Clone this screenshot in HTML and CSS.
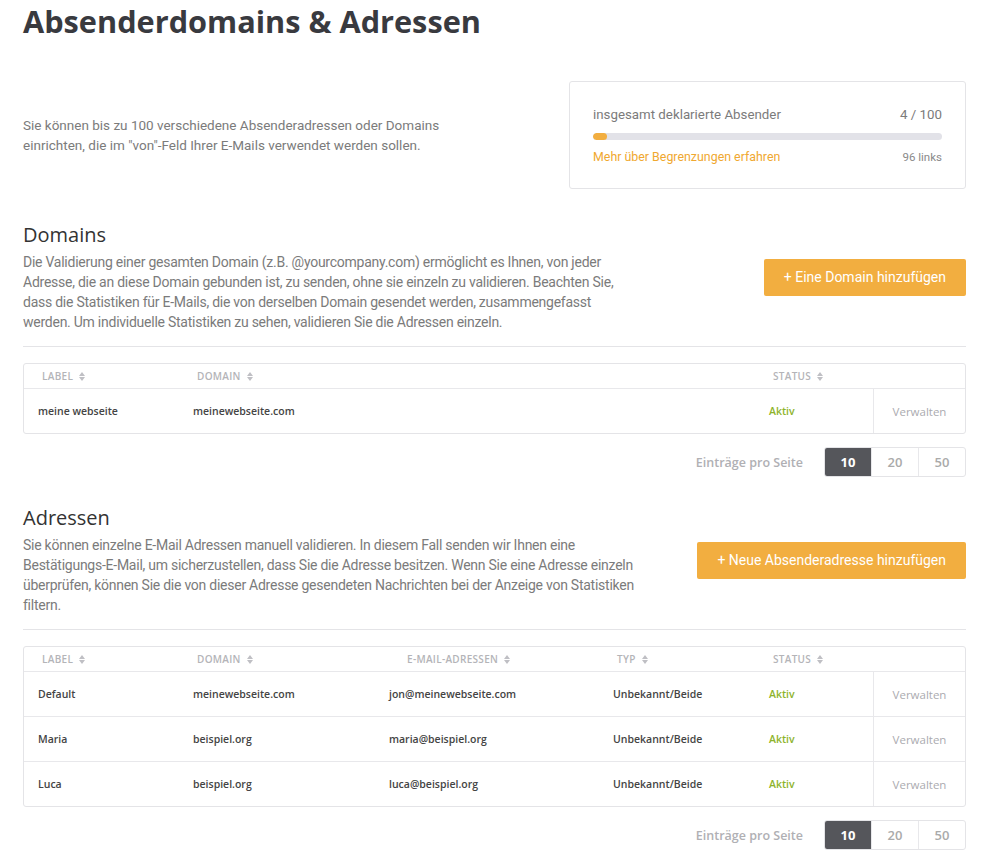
FILE: index.html
```html
<!DOCTYPE html>
<html>
	<head>
		<meta charset="UTF-8">
		<title>Absenderdomains &amp; Adressen</title>
		<link rel="stylesheet" href="styles.css">
	</head>
	<body>
		<div class="page">
			<h1 class="title">Absenderdomains &amp; Adressen</h1>

			<div class="intro">
				<p class="intro-text">Sie können bis zu 100 verschiedene Absenderadressen oder Domains einrichten, die im "von"-Feld Ihrer E-Mails verwendet werden sollen.</p>
				<div class="quota">
					<div class="quota-line">
						<span>insgesamt deklarierte Absender</span>
						<span>4 / 100</span>
					</div>
					<div class="quota-bar"><div class="quota-fill" style="width: 4%"></div></div>
					<div class="quota-foot">
						<a href="javascript:;" class="quota-link">Mehr über Begrenzungen erfahren</a>
						<span class="quota-left">96 links</span>
					</div>
				</div>
			</div>

			<!-- Domains -->
			<div class="section">
				<div class="section-head">
					<div class="section-info">
						<h2>Domains</h2>
						<p>Die Validierung einer gesamten Domain (z.B. @yourcompany.com) ermöglicht es Ihnen, von jeder Adresse, die an diese Domain gebunden ist, zu senden, ohne sie einzeln zu validieren. Beachten Sie, dass die Statistiken für E-Mails, die von derselben Domain gesendet werden, zusammengefasst werden. Um individuelle Statistiken zu sehen, validieren Sie die Adressen einzeln.</p>
					</div>
					<a href="javascript:;" class="btn-add">+ Eine Domain hinzufügen</a>
				</div>

				<div class="tbl tbl-domains">
					<div class="tr th">
						<div class="cell">LABEL <i class="sort"></i></div>
						<div class="cell">DOMAIN <i class="sort"></i></div>
						<div class="cell">STATUS <i class="sort"></i></div>
						<div class="cell"></div>
					</div>
					<div class="tr">
						<div class="cell">meine webseite</div>
						<div class="cell">meinewebseite.com</div>
						<div class="cell status">Aktiv</div>
						<div class="cell manage">Verwalten</div>
					</div>
				</div>

				<div class="pager">
					<span class="pager-label">Einträge pro Seite</span>
					<div class="pager-btns">
						<a href="javascript:;" class="on">10</a><a href="javascript:;">20</a><a href="javascript:;">50</a>
					</div>
				</div>
			</div>

			<!-- Adressen -->
			<div class="section">
				<div class="section-head">
					<div class="section-info section-info-wide">
						<h2>Adressen</h2>
						<p>Sie können einzelne E-Mail Adressen manuell validieren. In diesem Fall senden wir Ihnen eine Bestätigungs-E-Mail, um sicherzustellen, dass Sie die Adresse besitzen. Wenn Sie eine Adresse einzeln überprüfen, können Sie die von dieser Adresse gesendeten Nachrichten bei der Anzeige von Statistiken filtern.</p>
					</div>
					<a href="javascript:;" class="btn-add">+ Neue Absenderadresse hinzufügen</a>
				</div>

				<div class="tbl tbl-addresses">
					<div class="tr th">
						<div class="cell">LABEL <i class="sort"></i></div>
						<div class="cell">DOMAIN <i class="sort"></i></div>
						<div class="cell wide">E-MAIL-ADRESSEN <i class="sort"></i></div>
						<div class="cell">TYP <i class="sort"></i></div>
						<div class="cell">STATUS <i class="sort"></i></div>
						<div class="cell"></div>
					</div>
					<div class="tr">
						<div class="cell">Default</div>
						<div class="cell">meinewebseite.com</div>
						<div class="cell">jon@meinewebseite.com</div>
						<div class="cell type">Unbekannt/Beide</div>
						<div class="cell status">Aktiv</div>
						<div class="cell manage">Verwalten</div>
					</div>
					<div class="tr">
						<div class="cell">Maria</div>
						<div class="cell">beispiel.org</div>
						<div class="cell">maria@beispiel.org</div>
						<div class="cell type">Unbekannt/Beide</div>
						<div class="cell status">Aktiv</div>
						<div class="cell manage">Verwalten</div>
					</div>
					<div class="tr">
						<div class="cell">Luca</div>
						<div class="cell">beispiel.org</div>
						<div class="cell">luca@beispiel.org</div>
						<div class="cell type">Unbekannt/Beide</div>
						<div class="cell status">Aktiv</div>
						<div class="cell manage">Verwalten</div>
					</div>
				</div>

				<div class="pager">
					<span class="pager-label">Einträge pro Seite</span>
					<div class="pager-btns">
						<a href="javascript:;" class="on">10</a><a href="javascript:;">20</a><a href="javascript:;">50</a>
					</div>
				</div>
			</div>
		</div>
	</body>
</html>
```

FILE: styles.css
```css
body,h1,h2,p{
	margin: 0;
	padding: 0;
}
body{
	font-family: Roboto, "Liberation Sans", sans-serif;
	color: #7b7b7b;
	background: #fff;
}
a{
	text-decoration: none;
}
.page{
	padding: 1px 21px 0 23px;
}
.title{
	font-family: "Open Sans", "Liberation Sans", sans-serif;
	font-weight: 700;
	font-size: 30.7px;
	line-height: 40px;
	color: #393a3f;
}

/* intro + quota */
.intro{
	display: flex;
	justify-content: space-between;
	align-items: center;
	margin-top: 40px;
}
.intro-text{
	width: 450px;
	font-size: 13.5px;
	line-height: 20px;
}
.quota{
	width: 349px;
	padding: 23px 23px 22px;
	border: 1px solid #e4e4e7;
	border-radius: 3px;
}
.quota-line,
.quota-foot{
	display: flex;
	justify-content: space-between;
}
.quota-line{
	font-size: 13.3px;
	line-height: 20px;
	color: #7b7b7b;
}
.quota-bar{
	height: 7px;
	margin-top: 8px;
	border-radius: 4px;
	background: #e2e2e8;
	overflow: hidden;
}
.quota-fill{
	height: 100%;
	background: #f2ae40;
	border-radius: 4px;
}
.quota-foot{
	margin-top: 8px;
	line-height: 18px;
}
.quota-link{
	font-size: 12.4px;
	color: #f0a830;
}
.quota-left{
	font-size: 11.5px;
	color: #8a8a8a;
}

/* sections */
.section{
	margin-top: 33px;
}
.section + .section{
	margin-top: 28px;
}
.section-head{
	display: flex;
	justify-content: space-between;
	align-items: center;
	padding-bottom: 14px;
	border-bottom: 1px solid #e4e4e7;
}
.section-info{
	width: 610px;
}
.section-info-wide{
	width: 625px;
}
.section-info h2{
	font-family: "Open Sans", "Liberation Sans", sans-serif;
	font-weight: 400;
	font-size: 20px;
	line-height: 26px;
	color: #333;
}
.section-info p{
	margin-top: 4px;
	font-size: 14px;
	line-height: 20px;
	letter-spacing: -0.25px;
	color: #7b7b7b;
}
.btn-add{
	display: block;
	padding: 0 20px;
	height: 37px;
	line-height: 37px;
	background: #f2ae40;
	border-radius: 2px;
	color: #fff;
	font-size: 14px;
	white-space: nowrap;
}

/* tables */
.tbl{
	margin-top: 16px;
	border: 1px solid #e4e4e7;
	border-radius: 3px;
	font-family: "Open Sans", "Liberation Sans", sans-serif;
	font-weight: 600;
	font-size: 10.5px;
	color: #444;
}
.tr{
	display: grid;
	box-sizing: border-box;
	height: 45px;
	align-items: stretch;
	border-top: 1px solid #e8e8eb;
}
.tr.th{
	height: 24px;
	border-top: 0;
	color: #b4b4b8;
	font-size: 10px;
	letter-spacing: 0.3px;
}
.tbl-domains .tr{
	grid-template-columns: 155px 576px 118px 1fr;
}
.tbl-addresses .tr{
	grid-template-columns: 155px 196px 224px 156px 118px 1fr;
}
.cell{
	display: flex;
	align-items: center;
	padding-left: 14px;
}
.th .cell{
	padding-left: 18px;
}
.th .cell.wide{
	padding-left: 32px;
}
.sort{
	display: inline-flex;
	flex-direction: column;
	margin-left: 6px;
}
.sort:before,
.sort:after{
	content: '';
	display: block;
	width: 0;
	height: 0;
	border-left: 3px solid transparent;
	border-right: 3px solid transparent;
}
.sort:before{
	border-bottom: 4px solid #bfbfc4;
}
.sort:after{
	margin-top: 1px;
	border-top: 4px solid #bfbfc4;
}
.status{
	color: #8db32b;
}
.manage{
	justify-content: center;
	padding-left: 0;
	border-left: 1px solid #e8e8eb;
	color: #ababb0;
	font-weight: 500;
	font-size: 11.5px;
}

/* pager */
.pager{
	display: flex;
	justify-content: flex-end;
	align-items: center;
	margin-top: 13px;
}
.pager-label{
	margin-right: 21px;
	font-family: "Open Sans", "Liberation Sans", sans-serif;
	font-weight: 600;
	font-size: 12.5px;
	color: #b0b0b4;
}
.pager-btns{
	display: flex;
	border: 1px solid #e4e4e7;
	border-radius: 3px;
	overflow: hidden;
}
.pager-btns a{
	width: 46px;
	height: 28px;
	line-height: 28px;
	text-align: center;
	font-family: "Open Sans", "Liberation Sans", sans-serif;
	font-weight: 600;
	font-size: 13px;
	color: #aaa;
	border-left: 1px solid #e8e8eb;
}
.pager-btns a:first-child{
	border-left: 0;
}
.pager-btns a.on{
	background: #55565b;
	color: #fff;
	font-weight: 700;
}
```
